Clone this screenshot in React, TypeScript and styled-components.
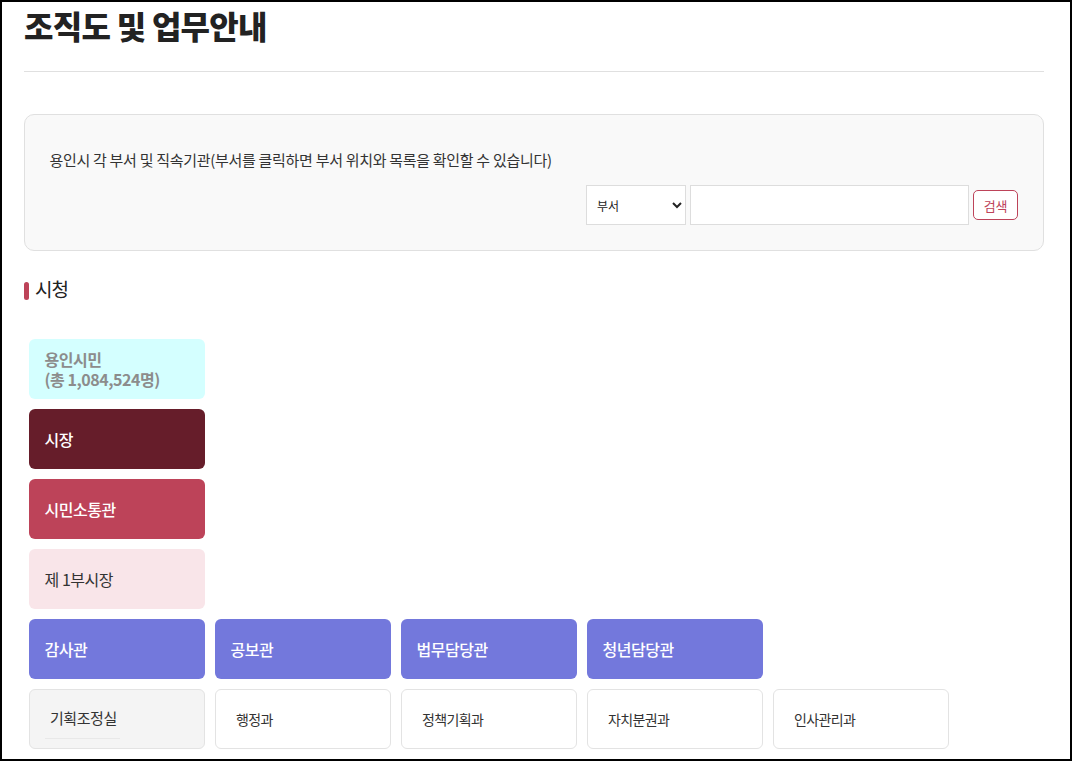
import React from "react";
import styled, { createGlobalStyle } from "styled-components";

const Global = createGlobalStyle`
  html, body { margin: 0; padding: 0; height: 100%; background: #fff; }
  body { font-family: "Noto Sans CJK KR", "Noto Sans", sans-serif; color: #222; overflow: hidden; }
  * { box-sizing: border-box; }
`;

const Frame = styled.div`
  height: 761px;
  width: 1072px;
  border: 2px solid #000;
  overflow: hidden;
  padding: 0 26px 0 22px;
`;

const Title = styled.h1`
  margin: 0;
  height: 70px;
  border-bottom: 1px solid #e0e0e0;
  font-size: 32px;
  line-height: 47px;
  font-weight: 900;
  letter-spacing: -0.75px;
  color: #222;
`;

const SearchPanel = styled.section`
  margin-top: 42px;
  height: 137px;
  background: #f9f9f9;
  border: 1px solid #e0e0e0;
  border-radius: 10px;
  padding: 30px 25px 0 24.5px;
`;

const Lead = styled.p`
  margin: 0;
  font-size: 15px;
  line-height: 30px;
  letter-spacing: -0.3px;
  color: #333;
`;

const SearchRow = styled.form`
  display: flex;
  justify-content: flex-end;
  align-items: center;
  gap: 4px;
  margin-top: 10px;
`;

const Select = styled.select`
  width: 100px;
  height: 40px;
  padding: 0 6px;
  background: #fff;
  border: 1px solid #ddd;
  border-radius: 0;
  font-family: inherit;
  font-size: 12px;
  color: #222;
`;

const Input = styled.input`
  width: 279px;
  height: 40px;
  background: #fff;
  border: 1px solid #ddd;
`;

const SearchButton = styled.button`
  width: 45px;
  height: 30px;
  padding: 0;
  background: #fff;
  border: 1px solid #bd4359;
  border-radius: 5px;
  font-family: inherit;
  font-size: 13px;
  letter-spacing: -0.3px;
  color: #bd4359;
`;

const SectionTitle = styled.h2`
  position: relative;
  margin: 23px 0 0;
  padding-left: 11px;
  font-size: 19px;
  line-height: 30px;
  font-weight: 400;
  letter-spacing: -1px;
  color: #222;
  &::before {
    content: "";
    position: absolute;
    left: 0;
    top: 8px;
    width: 5px;
    height: 18px;
    border-radius: 3px;
    background: #bd4359;
  }
`;

const Chart = styled.div`
  display: flex;
  flex-direction: column;
  gap: 10px;
  margin-top: 35px;
  padding-left: 5px;
`;

const Row = styled.div`
  display: flex;
  gap: 10px;
`;

type Kind = "citizen" | "mayor" | "comm" | "vice" | "office" | "dept" | "active";

const bg: Record<Kind, string> = {
  citizen: "#d4ffff",
  mayor: "#661d2a",
  comm: "#bd4359",
  vice: "#f9e5e9",
  office: "#7378dc",
  dept: "#fff",
  active: "#f4f4f4",
};
const fg: Record<Kind, string> = {
  citizen: "#8c8c8c",
  mayor: "#fff",
  comm: "#fff",
  vice: "#333",
  office: "#fff",
  dept: "#333",
  active: "#333",
};
const size: Record<Kind, string> = {
  citizen: "16px",
  mayor: "16px",
  comm: "16px",
  vice: "16px",
  office: "16px",
  dept: "14px",
  active: "15px",
};
const pad: Record<Kind, string> = {
  citizen: "15.5px",
  mayor: "15.5px",
  comm: "15.5px",
  vice: "15.5px",
  office: "15.5px",
  dept: "20px",
  active: "20px",
};

const Card = styled.div<{ $kind: Kind }>`
  position: relative;
  display: flex;
  align-items: center;
  width: 176px;
  height: 60px;
  border-radius: 6px;
  padding-left: ${(p) => pad[p.$kind]};
  padding-bottom: ${(p) => (p.$kind === "active" ? "2px" : "0")};
  background: ${(p) => bg[p.$kind]};
  color: ${(p) => fg[p.$kind]};
  border: ${(p) => (p.$kind === "dept" || p.$kind === "active" ? "1px solid #e3e3e3" : "0")};
  font-size: ${(p) => size[p.$kind]};
  font-weight: ${(p) => (p.$kind === "dept" || p.$kind === "active" || p.$kind === "vice" ? 400 : p.$kind === "citizen" ? 700 : 500)};
  line-height: 20.5px;
  letter-spacing: ${(p) => (p.$kind === "dept" ? "-0.6px" : "-0.45px")};
`;

const CardUnderline = styled.span`
  position: absolute;
  left: 15px;
  bottom: 9px;
  width: 75px;
  height: 1px;
  background: #e8e8e8;
`;

export default function App() {
  return (
    <>
      <Global />
      <Frame>
        <Title>조직도 및 업무안내</Title>
        <SearchPanel>
          <Lead>용인시 각 부서 및 직속기관(부서를 클릭하면 부서 위치와 목록을 확인할 수 있습니다)</Lead>
          <SearchRow onSubmit={(e) => e.preventDefault()}>
            <Select defaultValue="부서">
              <option>부서</option>
            </Select>
            <Input type="text" />
            <SearchButton type="button">검색</SearchButton>
          </SearchRow>
        </SearchPanel>
        <SectionTitle>시청</SectionTitle>
        <Chart>
          <Row>
            <Card $kind="citizen">
              <span>
                용인시민
                <br />
                (총 1,084,524명)
              </span>
            </Card>
          </Row>
          <Row><Card $kind="mayor">시장</Card></Row>
          <Row><Card $kind="comm">시민소통관</Card></Row>
          <Row><Card $kind="vice">제 1부시장</Card></Row>
          <Row>
            <Card $kind="office">감사관</Card>
            <Card $kind="office">공보관</Card>
            <Card $kind="office">법무담당관</Card>
            <Card $kind="office">청년담당관</Card>
          </Row>
          <Row>
            <Card $kind="active">기획조정실<CardUnderline /></Card>
            <Card $kind="dept">행정과</Card>
            <Card $kind="dept">정책기획과</Card>
            <Card $kind="dept">자치분권과</Card>
            <Card $kind="dept">인사관리과</Card>
          </Row>
        </Chart>
      </Frame>
    </>
  );
}
